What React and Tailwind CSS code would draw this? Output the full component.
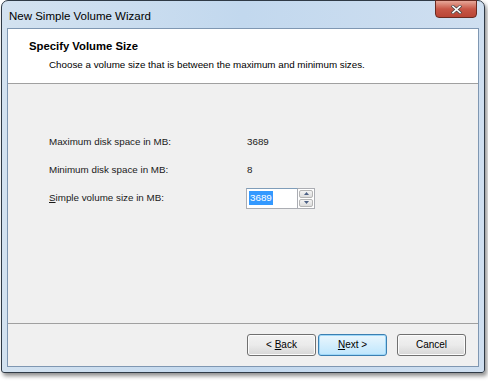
import React from "react";

const font = { fontFamily: '"Liberation Sans", Arial, sans-serif' };

function Btn({ children, primary }) {
  return (
    <div
      className={
        "w-[69px] h-[22px] rounded-[3px] flex items-center justify-center text-[10px] text-black " +
        (primary
          ? "border border-[#3c7fb1] bg-gradient-to-b from-[#eaf6fd] to-[#bee6fd] shadow-[inset_0_0_0_1px_#9ed8f9]"
          : "border border-[#707070] bg-gradient-to-b from-[#f2f2f2] via-[#ebebeb] to-[#d6d6d6] shadow-[inset_0_0_0_1px_#fcfcfc]")
      }
    >
      <span>{children}</span>
    </div>
  );
}

export default function App() {
  return (
    <div className="w-[488px] h-[381px] bg-white" style={font}>
      <div className="ml-[1px] w-[484px] h-[373px] rounded-t-[7px] rounded-b-[3px] border border-[#2f3a46] bg-gradient-to-r from-[#d3e2f0] via-[#c2d8ee] to-[#cfdff0] shadow-[2px_3px_4px_rgba(0,0,0,0.45)] flex flex-col">
        <div className="h-[27px] flex items-start justify-between pl-[7px] pr-[7px]">
          <span className="mt-[7px] text-[11.5px] text-black">New Simple Volume Wizard</span>
          <div className="w-[42px] h-[18px] mt-[-1px] rounded-b-[4px] border border-[#6a2a20] bg-gradient-to-b from-[#e6a799] via-[#c75646] to-[#b94535] flex items-center justify-center">
            <svg width="11" height="9" viewBox="0 0 11 9">
              <path d="M2 1.5 L9 7.5 M9 1.5 L2 7.5" stroke="#4a4a4a" strokeWidth="3" strokeLinecap="square" />
              <path d="M2 1.5 L9 7.5 M9 1.5 L2 7.5" stroke="#ffffff" strokeWidth="1.6" strokeLinecap="square" />
            </svg>
          </div>
        </div>
        <div className="flex-1 mx-[5px] border border-[#7f97b2] flex flex-col bg-[#f0f0f0]">
          <div className="h-[55px] bg-white border-b border-[#a0a0a0] pt-[9px] pl-[21px]">
            <div className="text-[11.3px] font-bold text-black">Specify Volume Size</div>
            <div className="pl-[20px] mt-[3px] text-[9.8px] text-black">
              Choose a volume size that is between the maximum and minimum sizes.
            </div>
          </div>
          <div className="flex-1 pt-[44px] pl-[41px] text-[9.8px] text-[#1a1a1a]">
            <div className="grid grid-cols-[198px_auto] auto-rows-[28px] items-center">
              <div>Maximum disk space in MB:</div>
              <div>3689</div>
              <div>Minimum disk space in MB:</div>
              <div>8</div>
              <div>
                <span className="underline">S</span>imple volume size in MB:
              </div>
              <div className="flex items-center -ml-[1px]">
                <div className="w-[52px] h-[21px] border border-[#abadb3] border-t-[#7f9db9] bg-white flex items-center pl-[2px]">
                  <span className="bg-[#3399ff] text-white px-[1px] leading-[14px]">3689</span>
                </div>
                <div className="flex flex-col h-[21px] border border-[#abadb3] border-l-0 bg-white p-[1px] gap-[1px]">
                  <div className="w-[14px] flex-1 rounded-[2px] border border-[#b5b5b5] bg-gradient-to-b from-[#f4f4f4] to-[#dcdcdc] flex items-center justify-center">
                    <svg width="5" height="3" viewBox="0 0 5 3"><path d="M0 3 L2.5 0 L5 3 Z" fill="#4d6185" /></svg>
                  </div>
                  <div className="w-[14px] flex-1 rounded-[2px] border border-[#b5b5b5] bg-gradient-to-b from-[#f4f4f4] to-[#dcdcdc] flex items-center justify-center">
                    <svg width="5" height="3" viewBox="0 0 5 3"><path d="M0 0 L5 0 L2.5 3 Z" fill="#4d6185" /></svg>
                  </div>
                </div>
              </div>
            </div>
          </div>
          <div className="h-[43px] border-t border-[#a0a0a0] flex items-center justify-end pr-[12px] pb-[1px]">
            <div className="flex gap-[2px]">
              <Btn>
                {"< "}
                <span className="underline">B</span>ack
              </Btn>
              <Btn primary>
                <span className="underline">N</span>
                {"ext >"}
              </Btn>
            </div>
            <div className="ml-[10px]">
              <Btn>Cancel</Btn>
            </div>
          </div>
        </div>
        <div className="h-[5px]" />
      </div>
    </div>
  );
}
